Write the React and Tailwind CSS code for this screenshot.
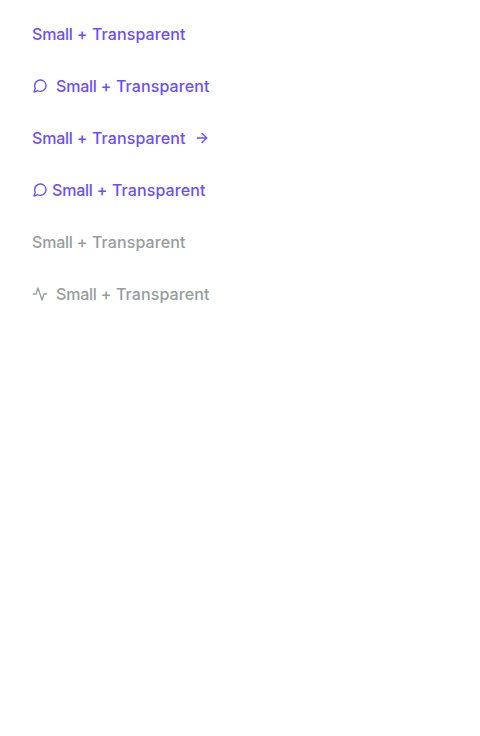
import React from 'react';
import { FiMessageCircle, FiArrowRight, FiActivity } from 'react-icons/fi';

function TextButton({ icon: Icon, trailing: Trailing, tight, disabled }) {
  return (
    <button
      type="button"
      disabled={disabled}
      className={`flex h-9 items-center text-base leading-4 font-medium ${disabled ? 'text-[#979c9e]' : 'text-[#6b4eff]'}`}
    >
      {Icon && <Icon size={16} className={tight ? 'mr-1' : 'mr-2'} />}
      <span className="w-[154px] whitespace-nowrap text-left tracking-[0.1px]">
        <span className="tracking-[-0.2px]">Small </span>+ Transparent
      </span>
      {Trailing && <Trailing size={16} className="ml-2" />}
    </button>
  );
}

export default function App() {
  return (
    <main className="flex min-h-screen flex-col items-start gap-4 bg-white px-8 py-4 font-['Inter',sans-serif]">
      <TextButton />
      <TextButton icon={FiMessageCircle} />
      <TextButton trailing={FiArrowRight} />
      <TextButton icon={FiMessageCircle} tight />
      <TextButton disabled />
      <TextButton icon={FiActivity} disabled />
    </main>
  );
}
